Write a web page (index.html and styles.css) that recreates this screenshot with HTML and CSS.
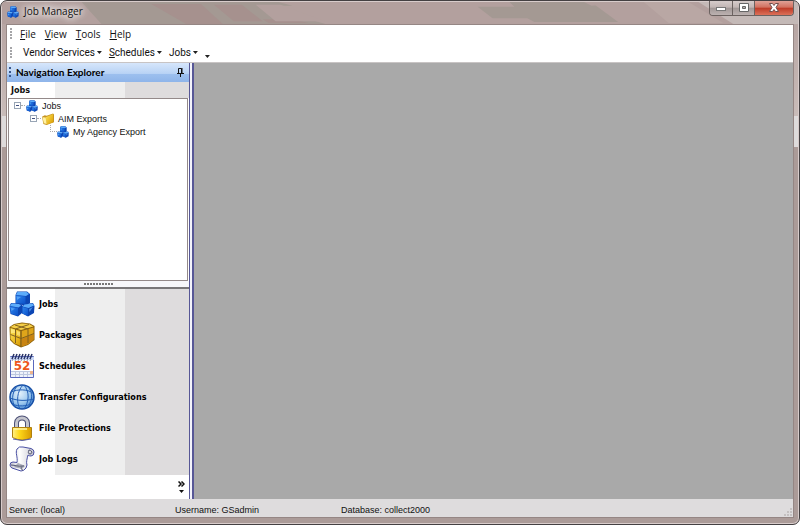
FILE: index.html
```html
<!DOCTYPE html>
<html lang="en">
<head>
<meta charset="utf-8">
<title>Job Manager</title>
<link rel="stylesheet" href="styles.css">
</head>
<body>
<svg class="defs" aria-hidden="true">
  <defs>
    <linearGradient id="blue" x1="0" y1="0" x2="1" y2="1"><stop offset="0" stop-color="#2f86ee"/><stop offset="1" stop-color="#0b4fc6"/></linearGradient>
    <linearGradient id="gold" x1="0" y1="0" x2="1" y2="1"><stop offset="0" stop-color="#ffe658"/><stop offset="1" stop-color="#d99a00"/></linearGradient>
    <linearGradient id="lock" x1="0" y1="0" x2="1" y2="0"><stop offset="0" stop-color="#fff08a"/><stop offset=".35" stop-color="#ffd91a"/><stop offset="1" stop-color="#d89a00"/></linearGradient>
    <linearGradient id="paper" x1="0" y1="0" x2="1" y2="0"><stop offset="0" stop-color="#c4c4d0"/><stop offset=".4" stop-color="#fff"/><stop offset="1" stop-color="#c8c8d2"/></linearGradient>
    <radialGradient id="ball" cx=".4" cy=".35" r=".7"><stop offset="0" stop-color="#e4f1fb"/><stop offset=".6" stop-color="#9cc8ee"/><stop offset="1" stop-color="#3f82d0"/></radialGradient>
    <symbol id="cubes" viewBox="0 0 26 26">
      <path d="M8 0.500 18 .5 21 3V12L17 14.500 6.500 13V4Z" fill="#0c46b4"/>
      <path d="M8.500 1 17.500 1 20 3 17 5 7 4Z" fill="#5cacfb"/>
      <path d="M7 4.500 16.500 5.500V13L7 12Z" fill="url(#blue)"/>
      <path d="M2 12 10 12.500 13 14V22L9 25.500 1.500 23 .5 15Z" fill="#0c46b4"/>
      <path d="M2.500 12.500 10 13 12 14.500 9.500 16.500 1 15Z" fill="#5cacfb"/>
      <path d="M1 15.500 9 17V25L2 22.500Z" fill="url(#blue)"/>
      <path d="M15 13 24 12 25.500 15 25 22 19 25.500 13 22.500V15Z" fill="#0c46b4"/>
      <path d="M15.500 13.500 23.500 12.500 25 14.500 19.500 17 13.500 15.500Z" fill="#5cacfb"/>
      <path d="M13.500 16 19 17.500V25L13.500 22.500Z" fill="url(#blue)"/>
      <path d="M8 5.500 12 6 8 9ZM2 17 6 17.500 2.500 20ZM20 18 24 16 20.500 21Z" fill="#74bcff" opacity=".6"/>
    </symbol>
  </defs>
</svg>
<div class="window">
  <header class="titlebar">
    <svg class="glass" viewBox="0 0 800 23" preserveAspectRatio="none" aria-hidden="true">
      <path fill="#a49993" d="M80 0H278L292 4H262L325 23H100ZM478 5H515L510 0H585L625 21H535L528 17H493ZM592 4 640 0 662 21H620Z"/>
      <path fill="#a6918e" d="M150 2H200L222 23H185ZM213 3H241L262 20H233ZM262 18H292L308 22H268Z"/>
      <path fill="#b3a09e" d="M255 3H280L325 20H275ZM592 0H645L670 23H622Z"/>
      <path fill="#b9a7a4" d="M645 0H690L725 22H670Z"/>
      <path fill="#c4b9b7" d="M700 0H800V23H735Z"/>
    </svg>
    <svg class="app-icon" aria-hidden="true"><use href="#cubes"/></svg>
    <h1 class="app-name">Job Manager</h1>
    <div class="captions">
      <button class="caption" aria-label="Minimize"><svg width="12" height="12"><rect x="1.500" y="5.500" width="9" height="3" fill="#fff" stroke="#777"/></svg></button>
      <button class="caption" aria-label="Maximize"><svg width="12" height="12"><path d="M1.500 1.500h9v8h-9zM4.500 4.500v2h3v-2z" fill="#fff" fill-rule="evenodd" stroke="#666"/></svg></button>
      <button class="caption close" aria-label="Close"><svg width="12" height="12"><path d="M1.500 1.500h3L6 3.500 7.500 1.500h3L8 5.500l2.500 4h-3L6 7.500l-1.500 2h-3L4 5.500z" fill="#fff" stroke="#70504e"/></svg></button>
    </div>
  </header>
  <div class="client">
    <nav class="bar" aria-label="Menu">
      <span class="grip"></span>
      <button class="menu"><u>F</u>ile</button><button class="menu"><u>V</u>iew</button><button class="menu"><u>T</u>ools</button><button class="menu"><u>H</u>elp</button>
    </nav>
    <nav class="bar tools" aria-label="Toolbar">
      <span class="grip"></span>
      <button class="drop">Vendor Services<i class="arrow"></i></button><button class="drop"><span><u>S</u>chedules</span><i class="arrow"></i></button><button class="drop">Jobs<i class="arrow"></i></button><button class="more" aria-label="Toolbar options"><i class="arrow"></i></button>
    </nav>
    <div class="content">
      <aside class="explorer">
        <div class="explorer-head"><span class="grip dark"></span><h2 class="head-text">Navigation Explorer</h2>
          <button class="pin" aria-label="Auto hide"><svg width="7" height="9"><path d="M1.500 5V.5h3V5M0 5.500h7M3.500 6v3M5 0v5" fill="none" stroke="#111"/></svg></button>
        </div>
        <h3 class="section">Jobs</h3>
        <ul class="tree">
          <li class="node"><button class="fold" aria-label="Collapse Jobs"></button><i class="dots"></i><svg class="mini" aria-hidden="true"><use href="#cubes"/></svg>Jobs</li>
          <li class="node level2"><button class="fold" aria-label="Collapse AIM Exports"></button><i class="dots"></i><svg class="mini" viewBox="0 0 13 13" aria-hidden="true"><path d="M0 4 3 2.500l2 .5 7-2.500 1 1v8.500L5 13l-3.500-1z" fill="#c69422"/><path d="M4 4.500l8-3.500V10l-7 2.500z" fill="url(#gold)"/><path d="M.5 4.500 4 5l1 7-3-1z" fill="#fff1a0"/></svg>AIM Exports</li>
          <li class="node level3"><i class="elbow"></i><svg class="mini" aria-hidden="true"><use href="#cubes"/></svg>My Agency Export</li>
        </ul>
        <div class="splitter"><i class="split-dots"></i></div>
        <ul class="links">
          <li><a class="link" href="#jobs"><svg class="big" aria-hidden="true"><use href="#cubes"/></svg>Jobs</a></li>
          <li><a class="link" href="#packages"><svg class="big" viewBox="0 0 26 26" aria-hidden="true">
            <path d="M.5 5 5 2 13 .5 21 1.500 25.500 4V18L19 23 12 25.500 5 22 1 18Z" fill="#8c610a"/><path d="M1.500 5 6 2.500 13 1.500 20 2 24.500 4.500 12 8Z" fill="#f5cf48"/><path d="M1.500 6 11.500 9V24L5 21 1.500 17Z" fill="url(#gold)"/><path d="M12.500 9 24.500 5.500V17.500L19 22 12.500 24.500Z" fill="#dfa51a"/><path d="M12.500 17 24.500 12V17.500L19 22 12.500 24.500Z" fill="#c98412"/>
            <path d="M6 3 19 7V21M20 2.500 6.500 7V21M1.500 12.500 12 16.500 25 11.500M12 8.500V25" fill="none" stroke="#80601f"/><path d="M2 7l4 1v3L2 11zM8 9l3 1v4l-3-1z" fill="#fff09a" opacity=".6"/></svg>Packages</a></li>
          <li><a class="link" href="#schedules"><svg class="big" viewBox="0 0 26 26" aria-hidden="true">
            <path d="M1.500 3.500h23v21H1.500z" fill="#fff" stroke="#5a68bd"/><path d="M1 4h24v3H1z" fill="#c9d8f8"/><path d="M3 6 5 1M6 6 8 1M9 6l2-5M12 6l2-5M15 6l2-5M18 6l2-5M21 6l2-5" stroke="#293467" stroke-width="1.500"/><path d="M3 8 4 6M6 8 7 6M9 8l1-2M12 8l1-2M15 8l1-2M18 8l1-2M21 8l1-2" stroke="#9097ac"/>
            <path d="M2 18h22v6H2z" fill="#eef2fa"/><path d="M2 18.500h22M2 21.500h22M6.500 18v6M10.500 18v6M14.500 18v6M18.500 18v6" stroke="#bcc7df"/><path d="M21 18h3v3h-3z" fill="#efb48c"/><text x="13" y="17" class="day">52</text></svg>Schedules</a></li>
          <li><a class="link" href="#transfer"><svg class="big" viewBox="0 0 26 26" aria-hidden="true"><circle cx="13" cy="13" r="12" fill="url(#ball)" stroke="#174fa6" stroke-width="1.500"/><path d="M14 1C8 7 7 18 11 25M15 1c6 7 5 17 0 24M2 8c7-3 16-3 22 1M1 14c8 3 16 3 24 1M3 20c7 3 14 2 20 0M8 2C2 10 3 18 6 23M20 4c4 6 3 12 0 17" fill="none" stroke="#235fb5"/></svg>Transfer Configurations</a></li>
          <li><a class="link" href="#protections"><svg class="big" viewBox="0 0 26 26" aria-hidden="true"><path d="M7.500 14V8a5.500 5 0 0 1 11 0v6" fill="none" stroke="#4c5076" stroke-width="5"/><path d="M7.500 14V8a5.500 5 0 0 1 11 0v6" fill="none" stroke="#c3c4cc" stroke-width="3"/><path d="M3.500 12.500h19v10q-9 5-19 0z" fill="url(#lock)" stroke="#af8010"/><path d="M4 24q9 3 18 0" fill="none" stroke="#5960a8"/><path d="M5 14h13" stroke="#fff6a8" stroke-width="1.500"/></svg>File Protections</a></li>
          <li><a class="link" href="#logs"><svg class="big" viewBox="0 0 26 26" aria-hidden="true"><path d="M8 3Q10 0 14 1l8 1.500q3 1 3 3.500 0 4-3 4-2 0-3-1c-1 4-2 7-1 10l-1 3q-2 3-5 3L3 22q-2-1-2-3 0-3 3-3l4 .5C9 11 6 7 8 3Z" fill="url(#paper)" stroke="#4a50a4"/><path d="M20 4c3 0 4 4 1 4-2 0-2-2-1-4M15 20c-3-1-4 4-1 4M2 19c4 0 8 2 11 1" fill="none" stroke="#50536e"/><path d="M9 17c3 1 5 2 7 3l-3 3-8-2z" fill="#6c6f84" opacity=".55"/></svg>Job Logs</a></li>
        </ul>
        <div class="overflow"><button class="chevrons" aria-label="Configure buttons"><svg width="7" height="12"><path d="M.5.5l2.500 2.500L.5 5.500M3.500.5 6 3 3.500 5.500" fill="none" stroke="#111" stroke-width="1.500"/><path d="M1 9h5L3.500 12z" fill="#111"/></svg></button></div>
      </aside>
      <main class="workspace"></main>
    </div>
    <footer class="status"><span class="cell">Server: (local)</span><span class="cell">Username: GSadmin</span><span class="cell last">Database: collect2000</span><svg class="resize" width="8" height="8" aria-hidden="true"><path d="M6 0h2v2H6zM3 3h2v2H3zM6 3h2v2H6zM0 6h2v2H0zM3 6h2v2H3zM6 6h2v2H6z" fill="#c4c0c0"/></svg></footer>
  </div>
</div>
</body>
</html>
```
FILE: styles.css
```css
* { box-sizing: border-box; }
body { margin: 0; background: #fff; color: #111; font: 9px "Liberation Sans", Arial, sans-serif; }
h1, h2, h3, ul { margin: 0; padding: 0; font-size: inherit; list-style: none; }
button { margin: 0; padding: 0; border: 0; background: none; color: inherit; font: inherit; }
svg { display: block; flex: none; }
.defs { position: absolute; width: 0; height: 0; }

.window {
  position: relative;
  display: flex;
  flex-direction: column;
  min-height: 100vh;
  padding: 0 5px 6px 5px;
  overflow: hidden;
  border: 1px solid #444042;
  border-radius: 7px;
  background: linear-gradient(#b3a09e, #c9bcb9 22%, #dedbdb 22%, #dedbdb 28%, #ab9b98 28%);
  box-shadow: inset 0 0 0 1px #d8cccb;
}
.titlebar { display: flex; align-items: flex-start; height: 23px; }
.glass { position: absolute; top: 1px; left: 1px; width: calc(100% - 2px); height: 22px; background: #b3a09e; }
.app-icon { position: relative; width: 12px; height: 12px; margin: 5px 5px 0 1px; }
.app-name {
  position: relative;
  flex: 1;
  font: 10px/21px "Open Sans", "Noto Sans", sans-serif;
  text-shadow: 0 0 6px #fff, 0 0 8px #fff, 0 0 10px #fff;
}
.captions {
  position: relative;
  display: flex;
  height: 15px;
  overflow: hidden;
  border: 1px solid #6b6260;
  border-top: 0;
  border-radius: 0 0 4px 4px;
}
.caption { display: grid; place-items: center; width: 23px; border-right: 1px solid #6b6260; background: linear-gradient(#d6cccb, #c2b6b4 45%, #a19796 50%, #bcb2b1); }
.caption:nth-child(2) { width: 22px; }
.caption.close { width: 38px; border-right: 0; background: linear-gradient(#e0a196, #d2705f 45%, #bd3b27 50%, #dc7059); }

.client { display: flex; flex: 1; flex-direction: column; border: 1px solid #958684; background: #fff; }
.bar { display: flex; align-items: center; height: 18px; padding-left: 3px; font: 10px "Open Sans", "Noto Sans", sans-serif; }
.tools { height: 20px; border-bottom: 1px solid #c8c4c4; font-family: Roboto, sans-serif; }
.grip { width: 2px; height: 12px; margin-right: 8px; background: repeating-linear-gradient(#a5a5a8 0 2px, transparent 2px 3px); }
.menu { margin-right: 9px; }
.drop { display: flex; align-items: center; gap: 2px; margin-right: 7px; }
.tools .grip { margin-right: 11px; }
.arrow { width: 5px; height: 3px; background: #222; clip-path: polygon(0 0, 100% 0, 50% 100%); }
.more { padding-top: 8px; }
.more .arrow { display: block; }

.content { display: flex; flex: 1; }
.explorer { display: flex; flex-direction: column; width: 187px; border-right: 2px solid #575796; box-shadow: inset -2px 0 #f4f4fb, inset -3px 0 #575796; padding-right: 3px; }
.workspace { flex: 1; background: #a9a9a9; }
.explorer-head { display: flex; align-items: center; height: 19px; padding: 0 5px 0 2px; background: linear-gradient(#d6e6fb, #b9d3f5 55%, #9cbfee 60%, #8fb5ea); }
.grip.dark { margin-right: 5px; background: repeating-linear-gradient(#39578c 0 2px, transparent 2px 4px); }
.head-text { flex: 1; padding-bottom: 2px; color: #000; font: bold 10px Lato, sans-serif; }
.section, .links { background: linear-gradient(90deg, #fff 48px, #eee 48px 118px, #dedcdd 118px); }
.section { padding-left: 4px; font: bold 9px/16px "DejaVu Sans Condensed", "DejaVu Sans", sans-serif; }
.tree { flex: 1; margin: 0 1px; padding: 0 5px; border: 1px solid #948a8a; background: #fff; }
.node { display: flex; align-items: center; height: 13px; white-space: nowrap; }
.level2 { padding-left: 16px; }
.level3 { padding-left: 36px; }
.fold { width: 7px; height: 7px; border: 1px solid #98a5b5; background: linear-gradient(#405080, #405080) center / 3px 1px no-repeat #fff; }
.dots { width: 4px; margin-right: 1px; border-top: 1px dotted #aaa; }
.elbow { width: 7px; height: 7px; margin-bottom: 6px; border: dotted #aaa; border-width: 0 0 1px 1px; }
.mini { width: 12px; height: 12px; margin-right: 4px; }
.splitter { display: grid; place-items: center; height: 8px; border-bottom: 2px solid #797779; background: #f7f7fa; }
.split-dots { width: 29px; height: 2px; background: repeating-linear-gradient(90deg, #777 0 2px, transparent 2px 3px); }
.link { display: flex; align-items: center; gap: 4px; height: 31px; padding: 0 0 2px 2px; color: #000; font: bold 9px "DejaVu Sans Condensed", "DejaVu Sans", sans-serif; text-decoration: none; }
.big { width: 26px; height: 26px; }
.day { fill: #ee571c; font: bold 12px "DejaVu Sans", sans-serif; text-anchor: middle; }
.overflow { display: flex; justify-content: flex-end; align-items: center; height: 24px; padding-right: 4px; }

.status { display: flex; align-items: center; height: 18px; padding: 3px 0 0 2px; background: #dedcdd; }
.cell { width: 166px; }
.last { flex: 1; }
.resize { align-self: flex-end; margin: 0 1px 1px 0; }
```
